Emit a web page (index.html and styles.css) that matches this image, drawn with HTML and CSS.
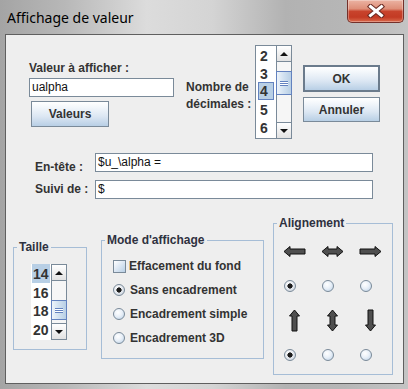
FILE: index.html
```html
<!DOCTYPE html>
<html lang="fr">
<head>
<meta charset="utf-8">
<title>Affichage de valeur</title>
<link rel="stylesheet" href="styles.css">
</head>
<body>
<div class="window">
  <div class="titlebar">
    <span class="title">Affichage de valeur</span>
    <div class="close">
      <svg width="18" height="14" viewBox="0 0 18 14"><path d="M3.5 2.5 L14.5 11.5 M14.5 2.5 L3.5 11.5" stroke="#6a2a22" stroke-width="5" stroke-linecap="square" fill="none"/><path d="M3.5 2.5 L14.5 11.5 M14.5 2.5 L3.5 11.5" stroke="#ffffff" stroke-width="3" stroke-linecap="square" fill="none"/></svg>
    </div>
  </div>
  <div class="content">
    <div class="top">
      <div class="valcol">
        <div class="lbl">Valeur à afficher :</div>
        <div class="field">ualpha</div>
        <div class="btn valeurs">Valeurs</div>
      </div>
      <div class="lbl nb">Nombre de<br>décimales :</div>
      <div class="list declist">
        <div class="items">
          <div class="item">2</div>
          <div class="item">3</div>
          <div class="item sel focus">4</div>
          <div class="item">5</div>
          <div class="item">6</div>
        </div>
        <div class="sbar">
          <div class="sbtn">
            <span class="arr-up"></span>
          </div>
          <div class="track"><div class="thumb"><span class="grip"></span></div></div>
          <div class="sbtn sbtn-down">
            <span class="arr-down"></span>
          </div>
        </div>
      </div>
      <div class="btncol">
        <div class="btn ok">OK</div>
        <div class="btn annuler">Annuler</div>
      </div>
    </div>
    <div class="frow r1"><span class="lbl flbl">En-tête :</span><div class="field wide">$u_\alpha =</div></div>
    <div class="frow r2"><span class="lbl flbl">Suivi de :</span><div class="field wide">$</div></div>
    <div class="bottom">
      <fieldset class="box taille">
        <legend>Taille</legend>
        <div class="list tlist">
          <div class="items">
            <div class="item sel">14</div>
            <div class="item">16</div>
            <div class="item">18</div>
            <div class="item">20</div>
          </div>
          <div class="sbar">
            <div class="sbtn">
              <span class="arr-up"></span>
            </div>
            <div class="track"><div class="thumb"><span class="grip"></span></div></div>
            <div class="sbtn sbtn-down">
              <span class="arr-down"></span>
            </div>
          </div>
        </div>
      </fieldset>
      <fieldset class="box mode">
        <legend>Mode d'affichage</legend>
        <div class="opts">
          <div class="opt"><span class="cb"></span><span class="lbl cblbl">Effacement du fond</span></div>
          <div class="opt"><span class="rb on"></span><span class="lbl rblbl">Sans encadrement</span></div>
          <div class="opt"><span class="rb"></span><span class="lbl rblbl">Encadrement simple</span></div>
          <div class="opt"><span class="rb"></span><span class="lbl rblbl">Encadrement 3D</span></div>
        </div>
      </fieldset>
      <fieldset class="box align">
        <legend>Alignement</legend>
        <div class="agrid">
          <svg width="23" height="11" viewBox="0 0 23 11"><polygon points="1,5.5 7,0.5 7,3 22,3 22,8 7,8 7,10.5" fill="#4f4f4f" stroke="#111" stroke-linejoin="miter"/></svg>
          <svg width="23" height="11" viewBox="0 0 23 11"><polygon points="1,5.5 7,0.5 7,3 16,3 16,0.5 22,5.5 16,10.5 16,8 7,8 7,10.5" fill="#4f4f4f" stroke="#111"/></svg>
          <svg width="23" height="11" viewBox="0 0 23 11"><polygon points="1,3 16,3 16,0.5 22,5.5 16,10.5 16,8 1,8" fill="#4f4f4f" stroke="#111"/></svg>
          <span class="rb on"></span>
          <span class="rb"></span>
          <span class="rb"></span>
          <svg width="11" height="23" viewBox="0 0 11 23"><polygon points="5.5,1 10.5,7 8,7 8,22 3,22 3,7 0.5,7" fill="#4f4f4f" stroke="#111"/></svg>
          <svg width="11" height="23" viewBox="0 0 11 23"><polygon points="5.5,1 10.5,7 8,7 8,16 10.5,16 5.5,22 0.5,16 3,16 3,7 0.5,7" fill="#4f4f4f" stroke="#111"/></svg>
          <svg width="11" height="23" viewBox="0 0 11 23"><polygon points="3,1 8,1 8,16 10.5,16 5.5,22 0.5,16 3,16" fill="#4f4f4f" stroke="#111"/></svg>
          <span class="rb on"></span>
          <span class="rb"></span>
          <span class="rb"></span>
        </div>
      </fieldset>
    </div>
  </div>
</div>
</body>
</html>
```

FILE: styles.css
```css
* { box-sizing: border-box; }
html, body { margin: 0; padding: 0; }
body {
  width: 408px;
  height: 389px;
  overflow: hidden;
  font-family: "Liberation Sans", Arial, sans-serif;
  font-size: 12px;
  color: #333;
}
.window {
  width: 408px;
  height: 389px;
  display: flex;
  flex-direction: column;
  background: linear-gradient(90deg, #a4a4a4 0%, #b8b8b8 16%, #dcdcdc 36%, #d4d4d4 52%, #b2b2b2 70%, #b6b6b6 84%, #c4c4c4 100%);
}
.titlebar {
  height: 34px;
  flex: none;
  display: flex;
  justify-content: space-between;
  align-items: flex-start;
}
.title {
  margin: 8px 0 0 7px;
  font-family: "Noto Sans", sans-serif;
  font-size: 14px;
  line-height: 20px;
  color: #000;
}
.close {
  width: 57px;
  height: 23px;
  margin-right: 4px;
  border: 1px solid #74302a;
  border-top: 0;
  border-radius: 0 0 5px 5px;
  background: linear-gradient(#ebb3a3 0%, #de8e78 40%, #c8432c 52%, #c33b24 78%, #da6a4c 100%);
  box-shadow: inset 0 0 0 1px rgba(255,255,255,0.3);
  display: flex;
  align-items: center;
  justify-content: center;
}
.content {
  flex: none;
  width: 399px;
  height: 350px;
  margin-left: 5px;
  border: 1px solid #5f5f5f;
  background: #eeeeee;
}
.lbl {
  font-weight: bold;
  line-height: 14px;
  white-space: nowrap;
  color: #333;
}

/* top section */
.top {
  display: flex;
  align-items: flex-start;
  height: 104px;
  padding-top: 10px;
}
.valcol {
  display: flex;
  flex-direction: column;
  align-items: flex-start;
  width: 145px;
  margin: 16px 0 0 23px;
}
.field {
  height: 19px;
  border: 1px solid #7a8a99;
  background: #fff;
  padding-left: 2px;
  line-height: 17px;
  color: #111;
  white-space: nowrap;
}
.valcol .field { width: 145px; margin-top: 3px; }
.btn {
  display: flex;
  align-items: center;
  justify-content: center;
  font-weight: bold;
  color: #333;
  border: 1px solid #7a8a99;
  background: linear-gradient(#ffffff 0%, #f3f7fb 22%, #dce7f3 60%, #b8cfe5 100%);
}
.valeurs { width: 78px; height: 26px; margin: 4px 0 0 2px; }
.nb { width: 69px; margin: 34px 0 0 12px; line-height: 17px; }

.list { display: flex; background: #fff; }
.items { overflow: hidden; }
.item {
  height: 18px;
  line-height: 18px;
  padding: 1px 0 0 2px;
  font-size: 14px;
  font-weight: bold;
  color: #333;
  white-space: nowrap;
}
.item.sel { background: #b8cfe5; }
.item.focus { border: 1px solid #6382bf; padding: 0 0 0 1px; line-height: 16px; }

.declist {
  width: 37px;
  height: 94px;
  border: 1px solid #7a8a99;
  border-right: 0;
}
.declist .items { width: 20px; padding: 0 2px; }

.sbar {
  width: 16px;
  flex: none;
  display: flex;
  flex-direction: column;
  border-left: 1px solid #7a8a99;
  border-right: 1px solid #7a8a99;
  background: #f6f6f6;
}
.sbtn {
  height: 16px;
  flex: none;
  display: flex;
  align-items: center;
  justify-content: center;
  background: linear-gradient(#ffffff, #e2e2e2);
  border-bottom: 1px solid #7a8a99;
}
.sbtn-down { border-bottom: 0; border-top: 1px solid #7a8a99; }
.arr-up {
  width: 0; height: 0;
  border-left: 4px solid transparent;
  border-right: 4px solid transparent;
  border-bottom: 4px solid #111;
}
.arr-down {
  width: 0; height: 0;
  border-left: 4px solid transparent;
  border-right: 4px solid transparent;
  border-top: 4px solid #111;
}
.track { flex: 1; }
.thumb {
  margin: 9px -1px 0;
  height: 24px;
  border: 1px solid #6382bf;
  background: linear-gradient(90deg, #eef4fa 0%, #d3e2f1 45%, #b8cfe5 100%);
  display: flex;
  align-items: center;
  justify-content: center;
}
.grip {
  width: 8px;
  height: 5px;
  background: linear-gradient(#6382bf 0 1px, #ffffff 1px 2px, #6382bf 2px 3px, #ffffff 3px 4px, #6382bf 4px 5px);
}

.btncol {
  display: flex;
  flex-direction: column;
  margin: 20px 0 0 11px;
}
.ok { width: 77px; height: 27px; border: 2px solid #6b7b8c; }
.annuler { width: 77px; height: 25px; margin-top: 5px; }

/* field rows */
.frow { display: flex; align-items: flex-start; }
.r1 { margin-top: 14px; }
.r2 { margin-top: 6px; }
.flbl { width: 60px; margin-left: 29px; }
.r1 .flbl { margin-top: 7px; }
.r2 .flbl { margin-top: 2px; }
.field.wide { width: 278px; }

/* bottom boxes */
.bottom {
  display: flex;
  align-items: flex-start;
  margin-top: 17px;
}
fieldset.box {
  margin: 0;
  padding: 0;
  min-width: 0;
  border: 1px solid #a6bdd6;
}
legend {
  margin-left: 3px;
  padding: 0 2px;
  font-weight: bold;
  line-height: 14px;
  color: #2e3140;
}
.taille { width: 74px; height: 110px; margin: 24px 0 0 7px !important; }
.mode { width: 163px; height: 126px; margin: 17px 0 0 14px !important; }
.align { width: 120px; height: 159px; margin: 0 0 0 9px !important; }

.tlist { width: 36px; height: 76px; margin: 10px 0 0 17px; }
.tlist .items { width: 20px; padding: 0 1px; }
.tlist .item { height: 18.5px; padding-left: 1px; }
.tlist .sbar { border: 1px solid #7a8a99; }
.tlist .thumb { margin-top: 19px; height: 20px; }

.opts { padding-top: 7px; }
.opt {
  height: 24px;
  display: flex;
  align-items: center;
  padding-left: 11px;
}
.cb {
  width: 13px;
  height: 13px;
  flex: none;
  border: 1px solid #7a8a99;
  background: linear-gradient(135deg, #ffffff 0%, #dfe9f4 45%, #b8cfe5 100%);
  margin-right: 3px;
}
.rb {
  width: 12px;
  height: 12px;
  flex: none;
  border-radius: 50%;
  border: 1px solid #7a8a99;
  background: radial-gradient(circle at 40% 35%, #ffffff 0%, #e9f0f8 45%, #b8cfe5 100%);
}
.rb.on {
  background: radial-gradient(circle at 50% 50%, #1c1c1c 0 2.3px, transparent 2.9px), radial-gradient(circle at 40% 35%, #ffffff 0%, #e4e8ee 50%, #c4cdd8 100%);
}
.opt .rb { margin-right: 5px; }

.agrid {
  display: grid;
  grid-template-columns: repeat(3, 38px);
  grid-template-rows: 35px 35px 34px 34px;
  margin: 3.5px 0 0 1px;
  align-items: center;
  justify-items: center;
}
.agrid svg { display: block; }
.agrid .rb { margin-right: 8px; }
```
